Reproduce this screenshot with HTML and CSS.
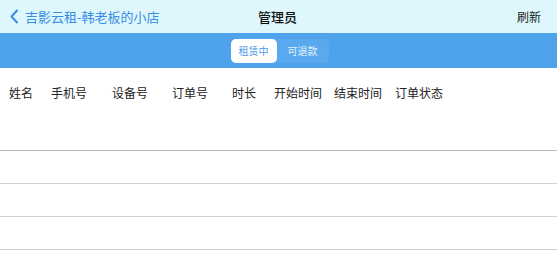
FILE: index.html
```html
<!DOCTYPE html>
<html lang="zh">
<head>
  <meta charset="UTF-8" />
  <meta name="viewport" content="width=device-width, initial-scale=1.0"/>
  <title>管理员</title>
  <link rel="stylesheet" href="styles.css">
</head>
<body>

  <header class="topbar">
    <div class="back">
      <svg class="chev" width="10" height="15" viewBox="0 0 10 15"><path d="M8 1.5 L2.5 7.5 L8 13.5" fill="none" stroke="#3a8de4" stroke-width="2" stroke-linecap="round" stroke-linejoin="round"/></svg>
      <span>吉影云租-韩老板的小店</span>
    </div>
    <div class="title">管理员</div>
    <div class="refresh">刷新</div>
  </header>

  <div class="tabbar">
    <div class="seg">
      <div class="seg-item active">租赁中</div>
      <div class="seg-item">可退款</div>
    </div>
  </div>

  <div class="thead">
    <div class="th c1">姓名</div>
    <div class="th c2">手机号</div>
    <div class="th c3">设备号</div>
    <div class="th c4">订单号</div>
    <div class="th c5">时长</div>
    <div class="th c6">开始时间</div>
    <div class="th c7">结束时间</div>
    <div class="th c8">订单状态</div>
  </div>

  <div class="rows">
    <div class="row first"></div>
    <div class="row"></div>
    <div class="row"></div>
    <div class="row last"></div>
  </div>

</body>
</html>
```

FILE: styles.css
```css
body {
  margin: 0;
  padding: 0;
  background: #fff;
  font-family: "Noto Sans CJK SC", "Noto Sans", sans-serif;
  color: #222;
}

.topbar {
  height: 33px;
  background: #ddf7fd;
  display: flex;
  align-items: center;
  position: relative;
  font-size: 13px;
}

.back {
  display: flex;
  align-items: center;
  padding-left: 9px;
  color: #3a8de4;
  gap: 6px;
}

.title {
  position: absolute;
  left: 0;
  right: 0;
  text-align: center;
  font-weight: 500;
  color: #111;
  padding-right: 2px;
  pointer-events: none;
}

.refresh {
  margin-left: auto;
  margin-right: 16px;
  font-size: 12px;
  color: #222;
}

.tabbar {
  height: 35px;
  background: #4fa3ec;
  display: flex;
  justify-content: center;
  align-items: center;
}

.seg {
  display: flex;
  background: #5aa9ee;
  border-radius: 5px;
  margin-left: 2px;
}

.seg-item {
  height: 24px;
  line-height: 24px;
  font-size: 10px;
  color: #e6f1fc;
  padding: 0 11px;
  border-radius: 5px;
  white-space: nowrap;
}

.seg-item.active {
  background: #fff;
  color: #4d9de8;
  padding: 0 8px;
}

.thead {
  display: flex;
  height: 49px;
  align-items: center;
  font-size: 12px;
  color: #222;
  padding-left: 9px;
}

.c1 { width: 42px; }
.c2 { width: 61px; }
.c3 { width: 60px; }
.c4 { width: 60px; }
.c5 { width: 42px; }
.c6 { width: 60px; }
.c7 { width: 61px; }
.c8 { width: 60px; }

.rows {
  padding-top: 33px;
}

.row {
  height: 33px;
  box-sizing: border-box;
  border-top: 1px solid #d0d0d0;
}

.row.first {
  border-top-color: #b8b8b8;
}

.row.last {
  height: 14px;
}
```
